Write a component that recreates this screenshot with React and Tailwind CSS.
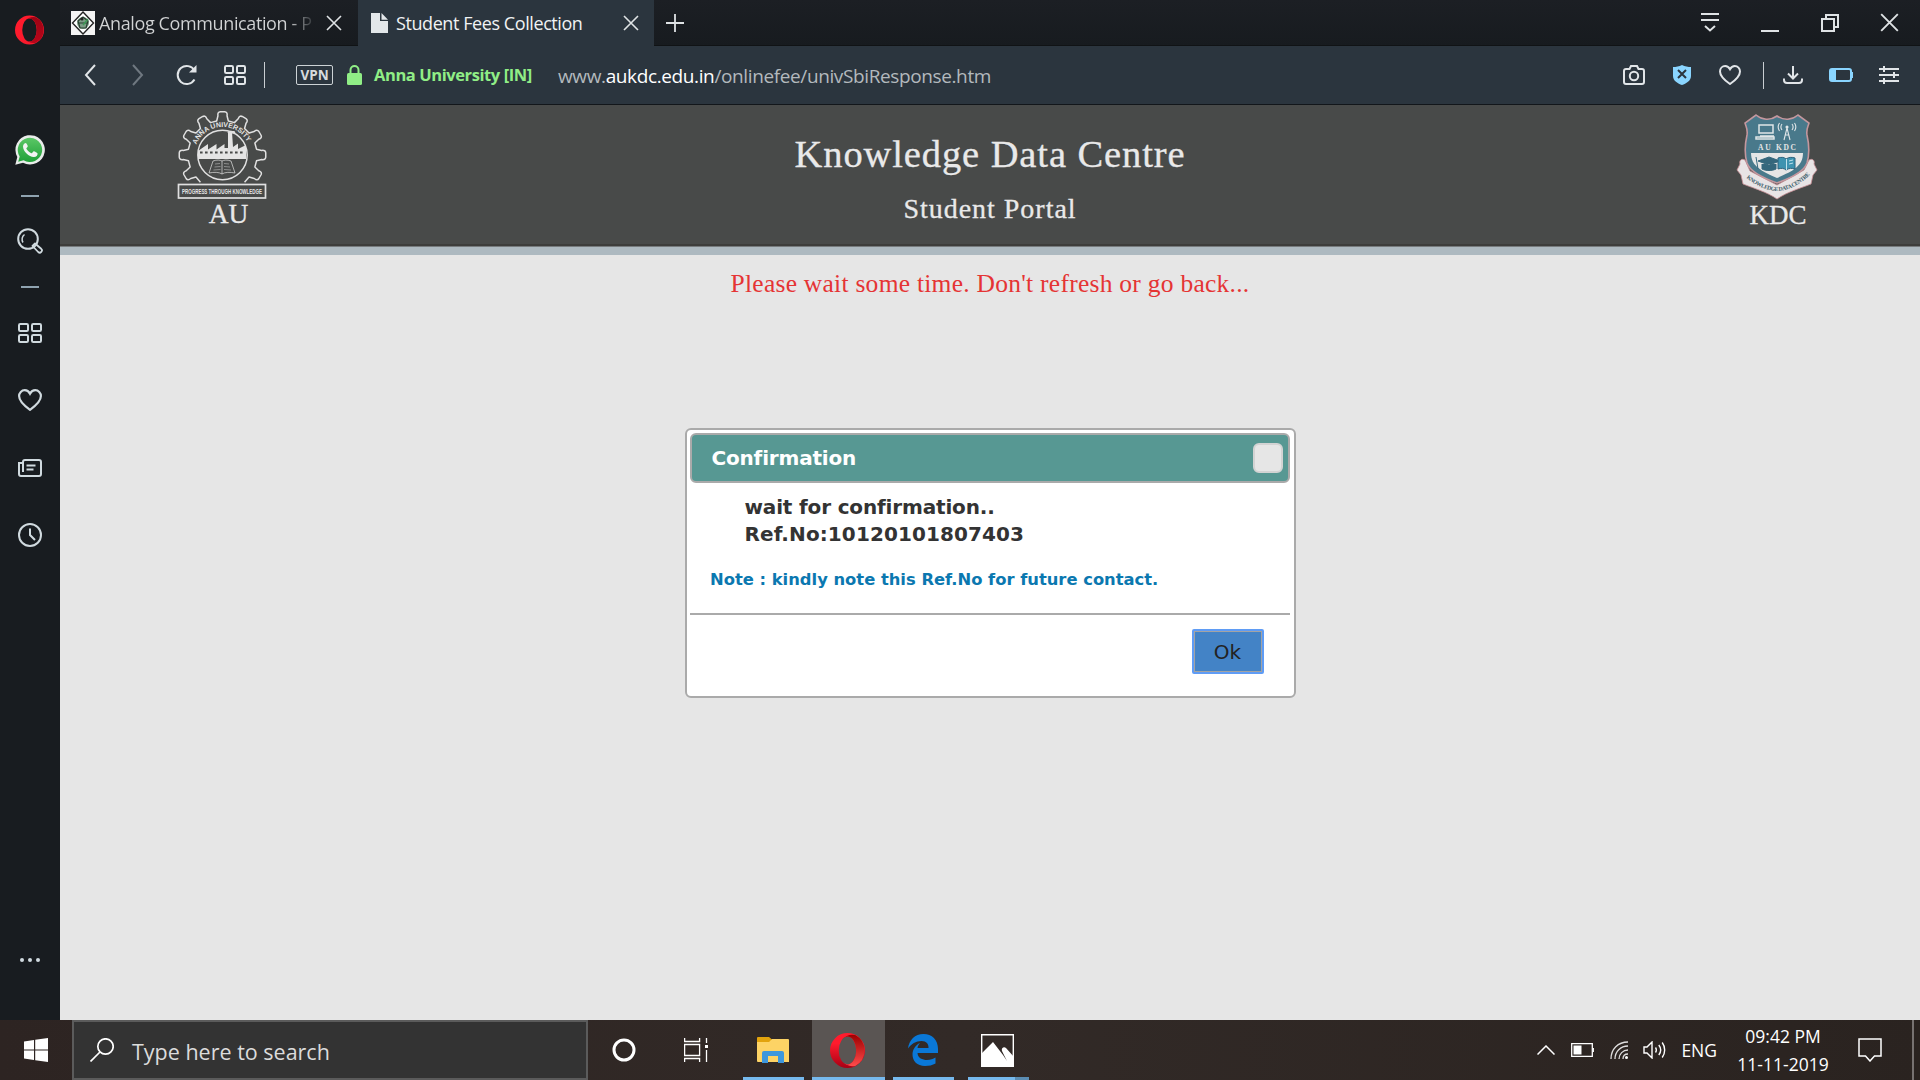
import React from "react";

const S = ({ w, h, vb, children, className = "", sw = 2 }) => (
  <svg width={w} height={h} viewBox={vb || `0 0 ${w} ${h}`} fill="none" stroke="currentColor" strokeWidth={sw} className={`block shrink-0 ${className}`}>{children}</svg>
);

const Close = ({ s = 16, sw = 1.6 }) => (
  <S w={s} h={s} vb="0 0 16 16" sw={sw}><path d="M1 1l14 14M15 1L1 15" /></S>
);

const Heart = ({ w = 22, h = 20 }) => (
  <S w={w} h={h} vb="0 0 22 20"><path d="M11 4.2C9.8 2 8.200 1 6.200 1 3.300 1 1 3.400 1 6.400c0 5 5.200 9.200 10 12.600 4.800-3.400 10-7.600 10-12.600C21 3.400 18.700 1 15.800 1c-2 0-3.600 1-4.800 3.200z" /></S>
);

const Tiles = ({ w = 22, h = 20 }) => (
  <S w={w} h={h} vb={`0 0 ${w} ${h}`}>
    <rect x="1" y="1" width={w / 2 - 3} height="7" rx="1.300" />
    <rect x={w / 2 + 2} y="1" width={w / 2 - 3} height="7" rx="1.300" />
    <rect x="1" y="12" width={w / 2 - 3} height="7" rx="1.300" />
    <rect x={w / 2 + 2} y="12" width={w / 2 - 3} height="7" rx="1.300" />
  </S>
);

const gearPath = (() => {
  const pts = [];
  const step = Math.PI / 6;
  const at = (r, a) => `${(46.5 + r * Math.sin(a)).toFixed(2)} ${(45 - r * Math.cos(a)).toFixed(2)}`;
  pts.push(`M${at(35, -2.46)}`);
  for (let i = -4; i <= 4; i++) {
    const a = i * step;
    pts.push(`L${at(34.5, a - 0.17)}`);
    pts.push(`L${at(39.5, a - 0.115)}`);
    pts.push(`Q${at(43.3, a - 0.12)} ${at(43.3, a - 0.05)}`);
    pts.push(`L${at(43.3, a + 0.05)}`);
    pts.push(`Q${at(43.3, a + 0.12)} ${at(39.5, a + 0.115)}`);
    pts.push(`L${at(34.5, a + 0.17)}`);
  }
  pts.push(`L${at(35, 2.46)}`);
  return pts.join(" ");
})();

const AULogo = () => (
  <svg width="92" height="90" viewBox="0 0 92 90" fill="none" stroke="#e0e0e0" className="block overflow-visible">
    <path d={gearPath} strokeWidth="1.500" strokeLinejoin="round" />
    <circle cx="46.500" cy="45" r="24.700" strokeWidth="1.500" />
    <path d="M22 49V41L32 34v5.500l8.500-5.500v5.500l8-5.500v4h3.500V22l4 0 1 15 5-3.500v5.500l8-4v14z" fill="#e4e4e4" stroke="none" />
    <path d="M52 23c3-2 5 0 7-1" strokeWidth="2.500" />
    <path d="M24 42.500h44" stroke="#484a49" strokeWidth="1.800" strokeDasharray="2.600 2.400" />
    <path d="M37 51c4-1.500 7-1 9 0 2-1 5-1.500 9 0l4 12c-5-1-10-1-13 1-3-2-8-2-13-1zM46 51v13" strokeWidth="1" opacity=".7" />
    <path d="M39 54l5-.5M38.500 57l6-.5M37.500 60l7-.5M48 53.500l5 .5M48 56.500l6 .5M48 59.500l7 .5" strokeWidth="1" opacity=".45" />
    <path id="auArc" d="M19.100 38.500A28.200 28.200 0 0 1 73.900 38.500" stroke="none" />
    <text fill="#e4e4e4" stroke="none" fontFamily="Liberation Sans" fontWeight="bold" fontSize="7"><textPath href="#auArc" startOffset="4" textLength="64">ANNA UNIVERSITY</textPath></text>
    <rect x="2.500" y="74.500" width="87" height="13.500" fill="#484a49" strokeWidth="1.700" />
    <text x="6" y="84.200" fill="#e4e4e4" stroke="none" fontFamily="Liberation Sans" fontWeight="bold" fontSize="8" textLength="80" lengthAdjust="spacingAndGlyphs">PROGRESS THROUGH KNOWLEDGE</text>
  </svg>
);

const KDCLogo = () => (
  <svg width="82" height="86" viewBox="0 0 82 86" fill="none" className="block overflow-visible">
    <path d="M9 46c-4-2-6 1-5 4l-3 6 4 5 2 9c10 4 24 8 34 15 10-7 24-11 34-15l2-9 4-5-3-6c1-3-1-6-5-4l-5 10-27 15L14 57z" fill="#e8e4e5" stroke="#c98f96" strokeWidth=".8" />
    <path d="M41 2c-7 5-15 4-21-1L9 9c1 4 3 6 2 12-2 9-3 18 0 28 3 9 16 15 30 20 14-5 27-11 30-20 3-10 2-19 0-28-1-6 1-8 2-12L62 1c-6 5-14 6-21 1z" fill="#49798b" stroke="#c3979e" strokeWidth="1.600" />
    <path d="M15 39h52c0 13-10 18-26 25-16-7-26-12-26-25z" fill="#e6e6e6" />
    <g stroke="#e0e6e8" strokeWidth="1.500">
      <rect x="23" y="11" width="14" height="8" />
      <path d="M24 22h14M20 23h18v2H20z" />
      <path d="M51 14l-3 12M51 14l3 12M49 21h4M46 10c-1.500 2-1.500 4 0 6M56 10c1.500 2 1.500 4 0 6M43.500 9c-2 3-2 5 0 8M58.500 9c2 3 2 5 0 8" strokeWidth="1.100" />
      <circle cx="51" cy="13" r=".8" />
    </g>
    <text x="22" y="36" fill="#e6e6e6" fontFamily="Liberation Serif" fontWeight="bold" fontSize="7.500" textLength="38">AU KDC</text>
    <path d="M22 47l11-4 11 4-11 4zM26 50v5c4 2 10 2 14 0v-5M20 43l2 12" fill="#35677c" stroke="#35677c" strokeWidth="1" />
    <path d="M42 44c3-1 6-1 8 1 3-2 6-2 9-1v11c-3-1-6-1-9 1-2-2-5-2-8-1z" fill="#3e93b0" stroke="#2c617b" strokeWidth="1" />
    <path d="M50.500 45v11M53 47l4-1M53 50l4-1" stroke="#bfe2ec" strokeWidth="1" />
    <path id="kdcArc" d="M9.500 63C18 71 31 77 41 77S65 71 75 59" />
    <text fill="#3f5f6c" fontFamily="Liberation Serif" fontWeight="bold" fontSize="5.800"><textPath href="#kdcArc" startOffset="1" textLength="72">KNOWLEDGE DATA CENTRE</textPath></text>
  </svg>
);

const Opera = ({ id, w, h, left, right }) => (
  <svg width={w} height={h} viewBox="0 0 34 34" className="block shrink-0">
    <defs>
      <linearGradient id={`${id}l`} x1="0" y1="0" x2="0" y2="1"><stop offset="0.3" stopColor={left[0]} /><stop offset="1" stopColor={left[1]} /></linearGradient>
      <linearGradient id={`${id}r`} x1="0" y1="0" x2="0" y2="1"><stop offset="0" stopColor={right[0]} /><stop offset="1" stopColor={right[1]} /></linearGradient>
    </defs>
    <path fillRule="evenodd" d="M17 0a17 17 0 0 1 0 34a17 17 0 0 1 0-34zM17 3.500a8.500 13.500 0 0 0 0 27a8.500 13.500 0 0 0 0-27z" fill={`url(#${id}l)`} />
    <path d="M11.500 6.700Q17 .5 24.500 2A17 17 0 0 1 24.500 32Q17 33.500 11.500 27.300A8.500 13.500 0 1 0 11.500 6.700z" fill={`url(#${id}r)`} />
  </svg>
);

const Cell = ({ className = "", children }) => (
  <div className={`flex shrink-0 items-center justify-center ${className}`}>{children}</div>
);

export default function App() {
  return (
    <div className="flex h-[1080px] w-[1920px] flex-col overflow-hidden bg-[#e6e6e6] font-['Open_Sans',sans-serif]">
      <div className="flex h-[1020px]">
        <aside className="flex w-[60px] shrink-0 flex-col items-center bg-[#181c20] text-[#d0dadf]">
          <Cell className="h-[60px] pr-[1px]"><Opera id="side" w={29} h={30} left={["#ff1b2d", "#fa1a2c"]} right={["#9c0414", "#b8051a"]} /></Cell>
          <Cell className="mt-[73px] h-[34px]">
            <svg width="30" height="30" viewBox="0 0 30 30" className="block">
              <defs><linearGradient id="wa" x1="0" y1="0" x2="0" y2="1"><stop offset="0" stopColor="#5bc766" /><stop offset="1" stopColor="#20a038" /></linearGradient></defs>
              <path d="M.3 29.700L2.300 22A14.700 14.700 0 1 1 8 27.700z" fill="#e9ecea" />
              <path d="M3.200 26.800l1.500-5.300A12.200 12.200 0 1 1 8.600 25.300z" fill="url(#wa)" />
              <path d="M10.800 8c-.7 0-2.800 1-2.800 3.600 0 5 6.400 10.700 11 10.400 2.200-.1 3.800-1.800 3.600-3.600 0-.6-3.500-2.400-4-2.200-.6.200-1.300 2-1.900 2-1.800-.3-5-3.200-5.400-4.700 0-.6 1.500-1.500 1.500-2.200 0-.6-1.200-3.300-2-3.300z" fill="#f2f4f3" />
            </svg>
          </Cell>
          <div className="mt-[28px] h-[2px] w-[18px] bg-[#8fa3b0]" />
          <Cell className="mt-[31px] h-[26px]">
            <S w={26} h={26}><circle cx="11" cy="11" r="9.800" /><path d="M6 14.500a6 6 0 0 1 1.500-8" strokeWidth="1.500" /><path d="M18 15.500l6.200 5.300a2 2 0 0 1-3 3.200L15.500 18z" strokeWidth="1.800" strokeLinejoin="round" /></S>
          </Cell>
          <div className="mt-[32px] h-[2px] w-[18px] bg-[#8fa3b0]" />
          <div className="mt-[35px]"><Tiles w={24} h={20} /></div>
          <div className="mt-[46px]"><Heart w={24} h={22} /></div>
          <div className="mt-[48px]"><S w={24} h={18}><path d="M5 13V3a2 2 0 0 1 2-2h14a2 2 0 0 1 2 2v12a2 2 0 0 1-2 2H3a2 2 0 0 1-2-2V4h4M8.500 6.500h9M8.500 10.500h7" /></S></div>
          <div className="mt-[46px]"><S w={24} h={24}><circle cx="12" cy="12" r="11" /><path d="M12 5.500V12l5 5" /></S></div>
          <div className="mt-auto mb-[58px] flex gap-1">
            <span className="size-1 rounded-full bg-[#d0dadf]" /><span className="size-1 rounded-full bg-[#d0dadf]" /><span className="size-1 rounded-full bg-[#d0dadf]" />
          </div>
        </aside>

        <div className="flex flex-1 flex-col">
          <div className="flex h-[46px] bg-linear-to-b from-[#1c1f24] to-[#171b1f] text-[#dfe3e5]">
            <div className="flex w-[298px] items-center border-b border-[#101315] pl-[11px]">
              <svg width="24" height="24" viewBox="0 0 24 24" className="block shrink-0">
                <rect width="24" height="24" fill="#f4f4f4" />
                <path d="M12 1l10.500 11L12 23 1.500 12z" fill="#fff" stroke="#222" strokeWidth="1.400" />
                <circle cx="12" cy="12" r="6" fill="#7d9c86" /><path d="M7 10l5-4 5 4-2 7H9zM8 12h8" stroke="#27402f" strokeWidth="1.200" fill="none" /><circle cx="11" cy="8" r="1.500" fill="#222" /><path d="M12 14l5-6" stroke="#3e9a55" strokeWidth="1.500" />
              </svg>
              <div className="ml-[4px] w-[215px] whitespace-nowrap bg-linear-to-r from-[#d2d4d5] from-88% to-[#2d3135] bg-clip-text text-[18px] leading-[24px] tracking-[-0.38px] text-transparent">Analog Communication - P</div>
              <div className="ml-[12px]"><Close /></div>
            </div>
            <div className="flex w-[296px] items-center bg-[#2b353e] pl-[13px]">
              <S w={17} h={20} className="text-[#e3e7ea]" sw={0}><path d="M0 0h9v8h8v12H0zM10.500 0L17 6.700h-6.500z" fill="currentColor" /></S>
              <span className="ml-[8px] text-[18px] leading-[24px] tracking-[-0.42px] text-[#f0f2f3]">Student Fees Collection</span>
              <div className="ml-auto mr-[15px]"><Close /></div>
            </div>
            <div className="flex flex-1 items-center border-b border-[#101315] pl-[12px]">
              <S w={18} h={18} sw={1.8}><path d="M9 0v18M0 9h18" /></S>
              <div className="ml-auto flex">
                <Cell className="w-[60px]"><S w={18} h={19}><path d="M0 1h18M0 7h18M4 13l5 4.500 5-4.500" /></S></Cell>
                <Cell className="w-[60px] pt-[1px]"><S w={18} h={18}><path d="M0 17h18" /></S></Cell>
                <Cell className="w-[60px]"><S w={18} h={18}><path d="M1 5h12v12H1zM5 5V1h12v12h-4" /></S></Cell>
                <Cell className="w-[60px] pr-[1px]"><Close s={19} /></Cell>
              </div>
            </div>
          </div>

          <div className="flex h-[59px] items-center border-b border-[#12161a] bg-[#2b353e] text-[#e1e5e8]">
            <div className="ml-[6px] flex">
              <Cell className="w-[48px]"><S w={12} h={22} sw={2}><path d="M11 1L2 11l9 10" /></S></Cell>
              <Cell className="w-[48px] text-[#6f7880]"><S w={12} h={22} sw={2}><path d="M1 1l9 10-9 10" /></S></Cell>
              <Cell className="w-[49px]"><S w={22} h={22}><path d="M18.500 15.500A9 9 0 1 1 18.500 6.500" /><path d="M20.500 1v7.500H13z" fill="currentColor" stroke="none" /></S></Cell>
              <Cell className="w-[48px]"><Tiles /></Cell>
            </div>
            <div className="ml-[5px] h-[26px] w-[1px] bg-[#c9ced2]" />
            <div className="ml-[31px] flex h-[20px] w-[37px] items-center justify-center rounded-[2px] border-[1.500px] border-[#ccd2d5] pt-[1px] text-[13.500px] font-bold leading-none text-[#d6dadd]">VPN</div>
            <S w={15} h={20} sw={2} className="ml-[14px] text-[#90ee86]"><path d="M3.500 9V5a4 4 0 0 1 8 0v4" /><rect y="8" width="15" height="12" rx="1.500" fill="currentColor" stroke="none" /></S>
            <span className="ml-[12px] w-[158px] whitespace-nowrap text-[16.500px] font-bold leading-[24px] tracking-[-0.42px] text-[#90ee86]">Anna University [IN]</span>
            <span className="ml-[26px] mt-[2px] text-[19px] leading-[24px] tracking-[-0.38px] text-[#b3b9bd]">www.<span className="text-white">aukdc.edu.in</span>/onlinefee/univSbiResponse.htm</span>
            <div className="ml-auto flex items-center">
              <Cell className="w-[48px]"><S w={22} h={20}><path d="M3 4h3.500L8 1h6l1.500 3H19a2 2 0 0 1 2 2v11a2 2 0 0 1-2 2H3a2 2 0 0 1-2-2V6a2 2 0 0 1 2-2z" /><circle cx="11" cy="11" r="4.200" /></S></Cell>
              <Cell className="w-[48px]"><S w={18} h={20} className="text-[#8ad5ff]"><path d="M9 0c3 1.500 6 2 9 2v9c0 5-5 7.500-9 9-4-1.500-9-4-9-9V2c3 0 6-.5 9-2z" fill="currentColor" stroke="none" /><path d="M5 5l8 8M13 5l-8 8" stroke="#2b353e" /></S></Cell>
              <Cell className="w-[48px]"><Heart /></Cell>
              <div className="ml-[9px] h-[27px] w-[1px] bg-[#c9ced2]" />
              <Cell className="ml-[5px] w-[48px]"><S w={20} h={18}><path d="M10 0v12M5 7.500l5 5 5-5M1 12.500v1.500a3 3 0 0 0 3 3h12a3 3 0 0 0 3-3v-1.500" /></S></Cell>
              <Cell className="w-[48px] text-[#8ad5ff]"><S w={24} h={14}><rect x="1" y="1" width="21" height="12" rx="2" /><path d="M2 2h5v10H2z" fill="currentColor" stroke="none" /><path d="M23 4v6" /></S></Cell>
              <Cell className="mr-[7px] w-[48px]"><S w={20} h={18}><path d="M0 3h20M0 9h20M0 15h20M5 0v6M15 6v6M5 12v6" /></S></Cell>
            </div>
          </div>

          <header className="grid h-[139px] grid-cols-[1fr_auto_1fr] bg-[#484a49] font-['Liberation_Serif',serif] text-[#e9e9e9] [-webkit-text-stroke:0.3px]">
            <div className="ml-[116px] flex w-[92px] flex-col items-center pt-[5px] [-webkit-text-stroke:0px]">
              <AULogo />
              <span className="ml-[13px] mt-[-1px] text-[27.500px] leading-[30px] [-webkit-text-stroke:0.3px]">AU</span>
            </div>
            <div className="flex flex-col items-center pt-[29px]">
              <span className="text-[38.500px] leading-[40px] tracking-[0.9px]">Knowledge Data Centre</span>
              <span className="mt-[19px] text-[28px] leading-[32px] tracking-[0.98px]">Student Portal</span>
            </div>
            <div className="mr-[102px] flex w-[82px] flex-col items-center justify-self-end pt-[9px] [-webkit-text-stroke:0px]">
              <KDCLogo />
              <span className="ml-[2px] text-[27px] leading-[30px] [-webkit-text-stroke:0.3px]">KDC</span>
            </div>
          </header>
          <div className="h-[3px] border-b border-[#777b7d] bg-[#3d3d3b]" />
          <div className="h-[8px] bg-[#adb9c0]" />

          <main className="flex flex-1 flex-col items-center font-['DejaVu_Sans',sans-serif]">
            <p className="mt-[12px] font-['Liberation_Serif',serif] text-[25.500px] leading-[34px] tracking-[0.26px] text-[#e53434]">Please wait some time. Don't refresh or go back...</p>
            <section className="mt-[127px] flex h-[270px] w-[611px] flex-col rounded-[6px] border-2 border-[#aaa] bg-white py-[3px] pl-[3px] pr-[4px]">
              <div className="flex h-[50px] items-center justify-between rounded-[6px] border-2 border-[#aaa] bg-[#579893] pl-[20px] pr-[5px]">
                <h1 className="text-[20px] font-bold leading-[24px] tracking-[-0.18px] text-white">Confirmation</h1>
                <button className="size-[30px] rounded-[6px] border-2 border-[#d3d3d3] bg-[#e6e6e6]" />
              </div>
              <div className="flex flex-1 flex-col items-start text-[20px] font-bold leading-[27px] text-[#333]">
                <p className="ml-[55px] mt-[11px] tracking-[-0.16px]">wait for confirmation..</p>
                <p className="ml-[55px] tracking-[0.1px]">Ref.No:10120101807403</p>
                <p className="ml-[20.500px] mt-[18px] text-[16.350px] text-[#0b78b0]">Note : kindly note this Ref.No for future contact.</p>
              </div>
              <div className="flex h-[80px] items-start justify-end border-t-2 border-[#aaa] pr-[26px] pt-[14px]">
                <button className="flex h-[45px] w-[72px] items-center justify-center rounded-[2px] border-2 border-[#5f9cf5] bg-[#4383c6] text-[20px] text-[#222] ring-1 ring-inset ring-[#a3a3a3]">Ok</button>
              </div>
            </section>
          </main>
        </div>
      </div>

      <footer className="flex h-[60px] bg-linear-to-r from-[#2d2422] via-[#322a27] to-[#2a2320] text-white">
        <Cell className="w-[72px]"><S w={24} h={24} sw={0}><path d="M0 3.500L10 2v9.500H0zM11.200 1.800L24 0v11.500H11.200zM0 12.600h10V22L0 20.500zM11.200 12.600H24V24l-12.800-1.800z" fill="currentColor" /></S></Cell>
        <div className="flex w-[516px] items-center border-2 border-[#5b5b5b] bg-[#333] pl-[16px]">
          <S w={24} h={24} sw={1.7}><circle cx="15.500" cy="8.500" r="7.700" /><path d="M10 14L.5 23.500" /></S>
          <span className="ml-[18px] mt-[3px] text-[21.500px] leading-[28px] text-[#dcdcdc]">Type here to search</span>
        </div>
        <Cell className="w-[72px]"><S w={24} h={24} sw={3}><circle cx="12" cy="12" r="10" /></S></Cell>
        <Cell className="w-[72px]"><S w={24} h={24} sw={1.3}><path d="M.6 0v3.500h15V0M.6 6.500h15v11H.6zM.6 24v-3.500h15V24M22.500 0v5M22.500 12v12" /><rect x="21" y="7" width="3" height="3" fill="currentColor" stroke="none" /></S></Cell>
        <div className="ml-[11px] flex w-[61px] flex-col items-center">
          <div className="flex flex-1 items-center pr-[2px] pt-[3px]">
            <svg width="32" height="26" viewBox="0 0 32 26" className="block"><path d="M0 1a1 1 0 0 1 1-1h11l3 2.500L13 6H0z" fill="#e2a30d" /><path d="M0 5h12l3-3h16a1 1 0 0 1 1 1v22H1a1 1 0 0 1-1-1z" fill="#fdd365" /><path d="M5 26V16a2 2 0 0 1 2-2h18a2 2 0 0 1 2 2v10h-6v-7H11v7z" fill="#3d97dd" /></svg>
          </div>
          <div className="h-[3px] w-full bg-[#76b9ed]" />
        </div>
        <div className="ml-[8px] flex w-[73px] flex-col items-center bg-[#5a5553]">
          <div className="flex flex-1 items-center pr-[2px] pt-[3px]"><Opera id="task" w={35} h={35} left={["#ff1b2d", "#a70014"]} right={["#9c0000", "#ff4b4b"]} /></div>
          <div className="h-[3px] w-full bg-[#76b9ed]" />
        </div>
        <div className="ml-[8px] flex w-[61px] flex-col items-center">
          <div className="flex flex-1 items-center pr-[1px] pt-[3px]">
            <svg width="30" height="32" viewBox="0 0 30 32" className="block"><path d="M0 14.500C1 6 7 0 15.500 0 24 0 30 6 30 14.800V19H9.500c.3 5 5 7 9.500 7 3.500 0 6-1 8.500-2.500v6C24.500 31.200 21 32 17 32 9 32 4.500 27 4.500 20.500c0-5 3-9.500 7.500-11.500-1.500 1.500-2.300 3.500-2.500 5h11c.2-4-2-7-7-7C8 7 3 10 0 14.500z" fill="#0a78d7" /></svg>
          </div>
          <div className="h-[3px] w-full bg-[#76b9ed]" />
        </div>
        <div className="ml-[14px] flex w-[61px] flex-col">
          <div className="flex flex-1 items-center pl-[13px] pt-[3px]">
            <svg width="33" height="33" viewBox="0 0 33 33" className="block"><path d="M.7.7h31.600v31.600H.7z" fill="none" stroke="#fff" strokeWidth="1.400" /><path d="M0 20L12 8l10 13 4 6-5-10c-1-3 2-5 4-3l8 9v10H0z" fill="#fff" /></svg>
          </div>
          <div className="flex h-[3px]"><div className="w-[47px] bg-[#76b9ed]" /><div className="flex-1 bg-[#5b8db3]" /></div>
        </div>
        <div className="ml-auto flex items-center">
          <S w={18} h={10} sw={1.5}><path d="M.5 9.500L9 1l8.500 8.500" /></S>
          <S w={23} h={14} sw={1.3} className="ml-[16px]"><path d="M.7.700h20.600v12.600H.7z" /><path d="M2.500 2.500h8v9h-8z" fill="currentColor" stroke="none" /><path d="M22.300 5v4" /></S>
          <S w={18} h={18} sw={1.3} className="ml-[16px]"><g opacity=".85"><path d="M1 18C1 8 8 1 18 1M5 18C5 10.500 10.500 5 18 5M9 18c0-5 4-9 9-9M13 18c0-3 2-5 5-5" /></g><circle cx="16.500" cy="16.500" r="1.500" fill="currentColor" stroke="none" /></S>
          <S w={23} h={18} sw={1.4} className="ml-[15px]"><path d="M1 6h3l5-5v16l-5-5H1zM12.500 6.500c1 1.500 1 3.500 0 5M15.800 4c2.300 3 2.300 7 0 10M19.200 1.500c3.300 4.500 3.300 10.500 0 15" /></S>
          <span className="ml-[15px] text-[17.500px] leading-[24px]">ENG</span>
          <div className="ml-[18px] flex w-[96px] flex-col items-center whitespace-nowrap text-[17.500px] leading-[28px]">
            <span>09:42 PM</span><span>11-11-2019</span>
          </div>
          <S w={24} h={24} sw={1.5} className="ml-[27px]"><path d="M1 1h22v17h-6.500L12 23l-4.500-5H1z" /></S>
          <div className="ml-[30px] mr-[6px] h-[60px] w-[2px] bg-[#777271]" />
        </div>
      </footer>
    </div>
  );
}
